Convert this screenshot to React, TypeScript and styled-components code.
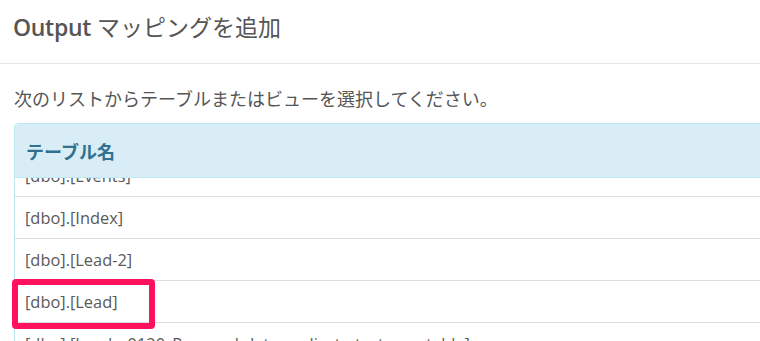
import React, { useEffect, useRef } from 'react'
import styled, { createGlobalStyle } from 'styled-components'

const GlobalStyle = createGlobalStyle`
  html, body {
    margin: 0;
    padding: 0;
    background: #fff;
    overflow: hidden;
  }
  body {
    font-family: "Open Sans", "Noto Sans CJK JP", sans-serif;
    color: #555;
  }
`

const Modal = styled.div`
  width: 820px;
  background: #fff;
`

const ModalHeader = styled.div`
  height: 64px;
  box-sizing: border-box;
  display: flex;
  align-items: center;
  padding: 0 13px 11px;
  border-bottom: 1px solid #e5e5e5;
`

const Title = styled.h4`
  margin: 0;
  font-size: 23px;
  font-weight: 400;
  color: #555;

  strong {
    font-weight: 600;
    letter-spacing: -0.3px;
  }
`

const ModalBody = styled.div`
  padding: 23px 0 0 14px;
`

const Lead = styled.p`
  margin: 0 0 11px;
  font-size: 18px;
  line-height: 25px;
  color: #555;
`

const TableArea = styled.div`
  position: relative;
`

const TableWrap = styled.div`
  border: 1px solid #bce8f1;
  border-radius: 4px 0 0 0;
  overflow: hidden;
`

const Head = styled.div`
  height: 53px;
  display: flex;
  align-items: center;
  padding: 0 11px;
  background: #d9edf7;
  border-bottom: 1px solid #bce8f1;
  font-size: 18px;
  font-weight: 700;
  color: #31708f;
`

const Scroller = styled.div`
  height: 200px;
  overflow-y: auto;
  scrollbar-width: none;

  &::-webkit-scrollbar {
    display: none;
  }
`

const Row = styled.div`
  height: 41px;
  display: flex;
  align-items: center;
  padding: 0 10px;
  border-bottom: 1px solid #ddd;
  font-size: 16.4px;
  color: #5a5a5a;
  white-space: nowrap;
`

// annotation drawn over the selected row
const Marker = styled.div`
  position: absolute;
  left: -2px;
  top: 156px;
  width: 143px;
  height: 50px;
  box-sizing: border-box;
  border: 6px solid #ff115e;
  border-radius: 4px;
  pointer-events: none;
`

const tables = [
  '[dbo].[Contacts]',
  '[dbo].[Events]',
  '[dbo].[Index]',
  '[dbo].[Lead-2]',
  '[dbo].[Lead]',
  '[dbo].[Lead_v0120_Personal-data-replicate-test-new-table]',
  '[dbo].[Orders]',
  '[dbo].[Products]',
]

export default function App() {
  const scrollRef = useRef<HTMLDivElement>(null)

  useEffect(() => {
    const el = scrollRef.current
    if (!el) return
    el.scrollTop = 65
    const id = requestAnimationFrame(() => {
      el.scrollTop = 65
    })
    return () => cancelAnimationFrame(id)
  }, [])

  return (
    <>
      <GlobalStyle />
      <Modal>
        <ModalHeader>
          <Title>
            <strong>Output</strong> マッピングを追加
          </Title>
        </ModalHeader>
        <ModalBody>
          <Lead>次のリストからテーブルまたはビューを選択してください。</Lead>
          <TableArea>
            <TableWrap>
              <Head>テーブル名</Head>
              <Scroller ref={scrollRef}>
                {tables.map(name => (
                  <Row key={name}>{name}</Row>
                ))}
              </Scroller>
            </TableWrap>
            <Marker />
          </TableArea>
        </ModalBody>
      </Modal>
    </>
  )
}
